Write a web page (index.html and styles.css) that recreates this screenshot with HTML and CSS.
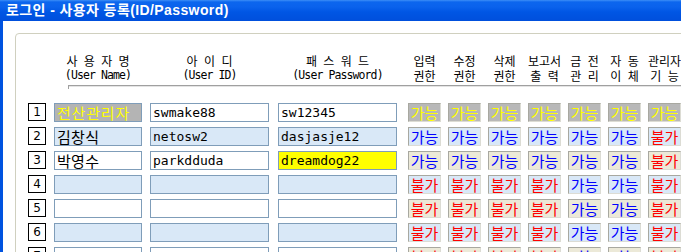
FILE: index.html
```html
<!DOCTYPE html>
<html lang="ko">
  <head>
    <meta charset="UTF-8" />
    <title>로그인 - 사용자 등록(ID/Password)</title>
    <link rel="stylesheet" href="styles.css">
  </head>
  <body>
    <div class="window">
      <div class="titlebar">로그인 - 사용자 등록(ID/Password)</div>

      <div class="client">
        <div class="group">
          <!-- column headers -->
          <div class="head">
            <div class="num-space"></div>
            <div class="hcell w-name"><span class="ko">사 용 자 명</span><span class="en">(User Name)</span></div>
            <div class="hcell w-id"><span class="ko">아 이 디</span><span class="en">(User ID)</span></div>
            <div class="hcell w-pw"><span class="ko">패 스 워 드</span><span class="en">(User Password)</span></div>
            <div class="hcell w-perm"><span class="ko">입력</span><span class="ko">권한</span></div>
            <div class="hcell w-perm"><span class="ko">수정</span><span class="ko">권한</span></div>
            <div class="hcell w-perm"><span class="ko">삭제</span><span class="ko">권한</span></div>
            <div class="hcell w-perm"><span class="ko">보고서</span><span class="ko">출 력</span></div>
            <div class="hcell w-perm"><span class="ko">금 전</span><span class="ko">관 리</span></div>
            <div class="hcell w-perm"><span class="ko">자 동</span><span class="ko">이 체</span></div>
            <div class="hcell w-perm"><span class="ko">관리자</span><span class="ko">기 능</span></div>
          </div>
          <div class="rule"></div>

          <div class="rows">
            <div class="row">
              <div class="num">1</div>
              <div class="field w-name admin ko-text">전산관리자</div>
              <div class="field w-id">swmake88</div>
              <div class="field w-pw">sw12345</div>
              <div class="perm admin">가능</div>
              <div class="perm admin">가능</div>
              <div class="perm admin">가능</div>
              <div class="perm admin">가능</div>
              <div class="perm admin">가능</div>
              <div class="perm admin">가능</div>
              <div class="perm admin">가능</div>
            </div>

            <div class="row even">
              <div class="num">2</div>
              <div class="field w-name ko-text">김창식</div>
              <div class="field w-id">netosw2</div>
              <div class="field w-pw">dasjasje12</div>
              <div class="perm yes">가능</div>
              <div class="perm yes">가능</div>
              <div class="perm yes">가능</div>
              <div class="perm yes">가능</div>
              <div class="perm yes">가능</div>
              <div class="perm yes">가능</div>
              <div class="perm no">불가</div>
            </div>

            <div class="row odd">
              <div class="num">3</div>
              <div class="field w-name ko-text">박영수</div>
              <div class="field w-id">parkdduda</div>
              <div class="field w-pw current">dreamdog22</div>
              <div class="perm yes">가능</div>
              <div class="perm yes">가능</div>
              <div class="perm yes">가능</div>
              <div class="perm yes">가능</div>
              <div class="perm yes">가능</div>
              <div class="perm yes">가능</div>
              <div class="perm no">불가</div>
            </div>

            <div class="row even">
              <div class="num">4</div>
              <div class="field w-name"></div>
              <div class="field w-id"></div>
              <div class="field w-pw"></div>
              <div class="perm no">불가</div>
              <div class="perm no">불가</div>
              <div class="perm no">불가</div>
              <div class="perm no">불가</div>
              <div class="perm yes">가능</div>
              <div class="perm yes">가능</div>
              <div class="perm no">불가</div>
            </div>

            <div class="row odd">
              <div class="num">5</div>
              <div class="field w-name"></div>
              <div class="field w-id"></div>
              <div class="field w-pw"></div>
              <div class="perm no">불가</div>
              <div class="perm no">불가</div>
              <div class="perm no">불가</div>
              <div class="perm no">불가</div>
              <div class="perm yes">가능</div>
              <div class="perm yes">가능</div>
              <div class="perm no">불가</div>
            </div>

            <div class="row even">
              <div class="num">6</div>
              <div class="field w-name"></div>
              <div class="field w-id"></div>
              <div class="field w-pw"></div>
              <div class="perm no">불가</div>
              <div class="perm no">불가</div>
              <div class="perm no">불가</div>
              <div class="perm no">불가</div>
              <div class="perm yes">가능</div>
              <div class="perm yes">가능</div>
              <div class="perm no">불가</div>
            </div>

            <div class="row odd">
              <div class="num">7</div>
              <div class="field w-name"></div>
              <div class="field w-id"></div>
              <div class="field w-pw"></div>
              <div class="perm no">불가</div>
              <div class="perm no">불가</div>
              <div class="perm no">불가</div>
              <div class="perm no">불가</div>
              <div class="perm yes">가능</div>
              <div class="perm yes">가능</div>
              <div class="perm no">불가</div>
            </div>
          </div>
        </div>
      </div>
    </div>
  </body>
</html>
```

FILE: styles.css
```css
* {
  margin: 0;
  padding: 0;
  box-sizing: border-box;
}

body {
  width: 681px;
  height: 252px;
  overflow: hidden;
  background: #ffffff;
  font-family: "Noto Sans CJK KR", "DejaVu Sans", sans-serif;
  color: #000000;
}

.window {
  display: flex;
  flex-direction: column;
  height: 100%;
}

/* XP style caption */
.titlebar {
  height: 21px;
  flex: none;
  padding-left: 6px;
  line-height: 21px;
  font-family: "Liberation Sans", "Noto Sans CJK KR", sans-serif;
  font-size: 14px;
  font-weight: 700;
  letter-spacing: 0.4px;
  color: #ffffff;
  white-space: nowrap;
  background: linear-gradient(
    to bottom,
    #3d8ff7 0px,
    #0c66ee 2px,
    #0a62ec 7px,
    #0056e4 12px,
    #004fdc 100%
  );
}

.client {
  flex: 1;
  border-left: 3px solid #0053e0;
  padding: 12px 0 0 12px;
  overflow: hidden;
}

.group {
  width: 900px;
  height: 400px;
  border: 1px solid #d0d0bf;
  border-radius: 4px 0 0 0;
  padding: 19px 0 0 12px;
}

/* headers */
.head {
  display: flex;
  align-items: flex-start;
  height: 29px;
}

.num-space {
  width: 18px;
  margin-right: 8px;
  flex: none;
}

.hcell {
  flex: none;
  display: flex;
  flex-direction: column;
  align-items: center;
  white-space: nowrap;
  line-height: 15px;
}

.hcell .ko {
  font-family: "Noto Sans CJK KR", sans-serif;
  font-size: 12px;
  word-spacing: 3px;
}

.hcell .en {
  font-family: "DejaVu Sans Mono", monospace;
  font-size: 11.5px;
  letter-spacing: -0.9px;
}

.w-name {
  width: 88px;
  margin-right: 8px;
}

.w-id {
  width: 119px;
  margin-right: 9px;
}

.w-pw {
  width: 119px;
  margin-right: 11px;
}

.w-perm {
  width: 33px;
  margin-right: 7px;
}

.rule {
  position: relative;
  margin: 3px 0 16px 40px;
  height: 2px;
  border-top: 1px solid #a0a0a0;
  border-bottom: 1px solid #e4e4e4;
}

.rule::before {
  content: "";
  position: absolute;
  left: 0;
  top: 0;
  width: 1px;
  height: 3px;
  background: #a0a0a0;
}

/* data rows */
.row {
  display: flex;
  align-items: flex-start;
  margin-bottom: 5px;
}

.num {
  flex: none;
  width: 18px;
  height: 18px;
  margin-right: 8px;
  border: 1px solid #000000;
  background: #ffffff;
  text-align: center;
  font-family: "DejaVu Sans", sans-serif;
  font-size: 12px;
  line-height: 16px;
}

.field {
  flex: none;
  height: 19px;
  padding-left: 2px;
  border: 1px solid #7f9db9;
  background: #ffffff;
  font-family: "DejaVu Sans Mono", "Noto Sans CJK KR", monospace;
  font-size: 13px;
  line-height: 17px;
  white-space: nowrap;
  overflow: hidden;
}

.field.ko-text {
  font-family: "Noto Sans CJK KR", sans-serif;
  font-size: 15px;
  letter-spacing: 0.3px;
}

.even .field {
  background: #d9e8f7;
}

.field.admin {
  background: #b4b4b4;
  color: #ffff00;
  letter-spacing: 0.8px;
}

.field.current {
  background: #ffff00;
}

.perm {
  flex: none;
  width: 33px;
  height: 19px;
  margin-right: 7px;
  border: 1px solid;
  border-color: #a8a8a0 #dcdcd4 #dcdcd4 #a8a8a0;
  background: #ece9d8;
  text-align: center;
  font-family: "Noto Sans CJK KR", sans-serif;
  font-size: 15px;
  line-height: 17px;
  white-space: nowrap;
  overflow: hidden;
}

.even .perm {
  background: #d9e8f7;
}

.perm.yes {
  color: #0000ff;
}

.perm.no {
  color: #ff0000;
}

.perm.admin {
  background: #b8b8b8;
  color: #ffff00;
}
```
